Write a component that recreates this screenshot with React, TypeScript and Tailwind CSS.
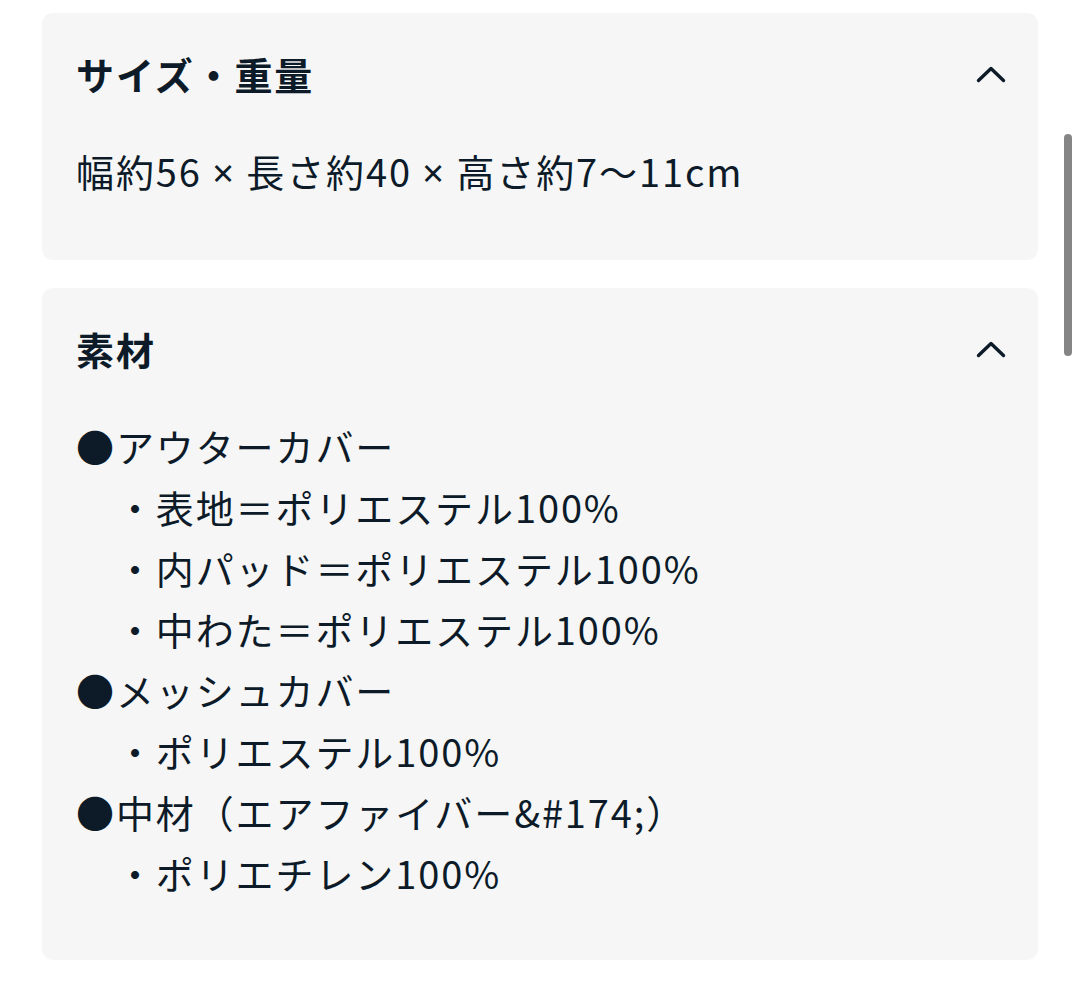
import React from "react";

function Chevron() {
  return (
    <svg width="30" height="18" viewBox="0 0 30 18" fill="none" className="shrink-0">
      <path d="M2.5 15.5 L15 3.5 L27.5 15.5" stroke="#0d1b29" strokeWidth="3.4" strokeLinecap="round" strokeLinejoin="round" />
    </svg>
  );
}

function Card({ title, children }: { title: string; children: React.ReactNode }) {
  return (
    <div className="rounded-[11px] bg-[#f6f6f7] pl-[34px] pr-[32px] pt-[37px] pb-[57px]">
      <div className="flex h-[48px] items-center justify-between">
        <div className="text-[38px] font-bold leading-[48px] tracking-[0.05em]">{title}</div>
        <Chevron />
      </div>
      <div className="mt-[42px] text-[38px] leading-[61px] whitespace-pre-wrap tracking-[0.05em]">
        {children}
      </div>
    </div>
  );
}

function X() {
  return <span style={{ fontFamily: '"Noto Sans", sans-serif' }}>×</span>;
}

export default function App() {
  const lines = [
    "●アウターカバー",
    "　・表地＝ポリエステル100%",
    "　・内パッド＝ポリエステル100%",
    "　・中わた＝ポリエステル100%",
    "●メッシュカバー",
    "　・ポリエステル100%",
    "●中材（エアファイバー&#174;）",
    "　・ポリエチレン100%",
  ];
  return (
    <div
      className="relative min-h-[981px] bg-white px-[42px] pt-[13px] text-[#0d1b29]"
      style={{ fontFamily: '"Noto Sans CJK JP", "Noto Sans", sans-serif' }}
    >
      <div className="flex flex-col gap-[28px]">
        <Card title="サイズ・重量">
          <div>
            幅約56 <X /> 長さ約40 <X /> 高さ約7〜11cm
          </div>
        </Card>
        <Card title="素材">
          {lines.map((l, i) => (
            <div key={i}>{l}</div>
          ))}
        </Card>
      </div>
      <div className="absolute right-[8px] top-[134px] h-[222px] w-[8px] rounded-full bg-[#858585]" />
    </div>
  );
}
